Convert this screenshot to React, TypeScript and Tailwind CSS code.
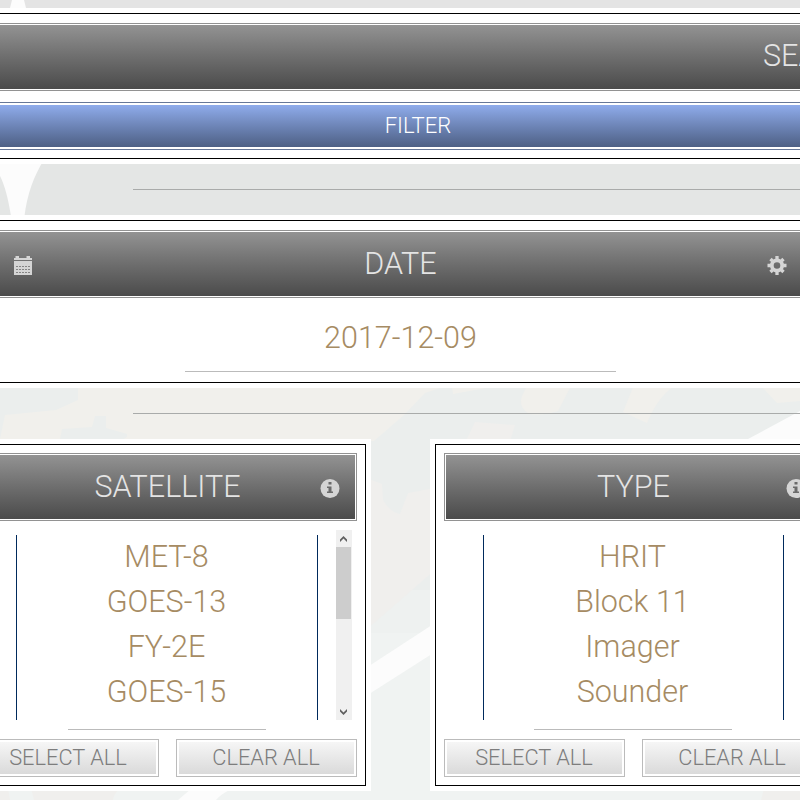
import React from "react";

function Backdrop() {
  return (
    <svg className="absolute inset-0" width="800" height="800" viewBox="0 0 800 800">
      <rect width="800" height="10" fill="#e4e4e4" />
      <rect y="160" width="800" height="60" fill="#e4e6e5" />
      <rect y="385" width="800" height="415" fill="#ebeeed" />
      <rect y="590" width="800" height="60" fill="#eef1f0" />
      <rect y="633" width="800" height="167" fill="#f0f3f2" />
      <path d="M10 8L13 -4H23L26 8Z" fill="#fcfcfc" />
      <path d="M0 160H44C34 175 27 195 24.500 216H11C8 198 5 186 0 176Z" fill="#fcfcfc" />
      <path d="M78 385H445L440 388L425 393L404 415L374 441H120L127 437L127 434L106 428V416L95 416L92 427L62 429L60 439H0L5 415L56 410L78 400Z" fill="#f1f0ec" />
      <path d="M452 387H492L486 388L453 394Z" fill="#f1f0ec" />
      <path d="M527 386H571L558 411Q543 416 530 414Q518 408 522 396Z" fill="#f1f0ec" />
      <path d="M634 385H676Q658 396 647 423L623 412Z" fill="#f1f0ec" />
      <path d="M760 385H800V401L777 403Z" fill="#f1f0ec" />
      <path d="M475 422L515 425L510 441H466Z" fill="#f0efed" />
      <path d="M748 439L800 411V439Z" fill="#fcfcfc" />
      <path d="M366 478L382 484L383 500Q390 512 400 514L408 493L435 488V570L366 630Z" fill="#f0efed" />
      <path d="M366 668L435 623V652L366 696Z" fill="#fcfcfc" />
      <path d="M0 788H8L10 800H0ZM31 788H121Q114 793 113 800H34ZM764 788H800V800H761Z" fill="#f0efed" />
      <path d="M192 788H234Q222 793 216 800H178Z" fill="#fcfcfc" />
    </svg>
  );
}

function Heading({ title, left, right, className = "", titleClass = "" }: { title: string; left?: React.ReactNode; right?: React.ReactNode; className?: string; titleClass?: string }) {
  return (
    <div className={`h-[68px] border border-[#929292] bg-white p-px ${className}`}>
      <div className="flex h-16 items-center bg-linear-to-b from-[#939393] to-[#4b4b4b] text-[30.5px] leading-[45px] text-[#e4e4e4]">
        <div className="w-12">{left}</div>
        <div className={`-mt-px flex-1 text-center ${titleClass}`}>{title}</div>
        <div className="w-12">{right}</div>
      </div>
    </div>
  );
}

function CalendarIcon() {
  return (
    <svg className="mt-0.5 ml-[13px]" width="20" height="20" viewBox="0 0 20 20" fill="#d5d5d5">
      <path d="M1 3H2.500V1H6V3H13.500V1H17V3H19V5H1Z M1 6H19V20H1Z" />
      <path d="M3 11.500H17M3 14.500H17M3 17.500H17" stroke="#858585" strokeDasharray="2 1" />
    </svg>
  );
}

function GearIcon() {
  return (
    <svg className="mt-0.5 ml-[15px]" width="20" height="20" viewBox="0 0 20 20">
      <circle cx="10" cy="10.500" r="5.200" fill="none" stroke="#d5d5d5" strokeWidth="3.800" />
      <path d="M10 1V4M10 17V20M.5 10.500H3.500M16.500 10.500H19.500M3.500 4L5.500 6M14.500 15L16.500 17M3.500 17L5.500 15M14.500 6L16.500 4" stroke="#d5d5d5" strokeWidth="3.300" />
    </svg>
  );
}

function InfoIcon() {
  return (
    <svg className="mt-[3px] ml-[13px]" width="20" height="20" viewBox="0 0 20 20">
      <circle cx="10" cy="9.500" r="9.500" fill="#d5d5d5" />
      <path d="M8.500 3H11.500V5.500H8.500ZM7 7.500H11.500V12.500H13V14H7V12.500H8.500V9H7Z" fill="#6b6b6b" />
    </svg>
  );
}

function Divider() {
  return (
    <div className="flex h-[51px] pt-[25px]">
      <div className="ml-[133px] h-px flex-1 bg-[#a9abaa]" />
    </div>
  );
}

function GreyButton({ label }: { label: string }) {
  return (
    <button className="h-[38px] w-[181px] border border-[#bbbbbb] bg-white p-0.5">
      <span className="block h-8 bg-linear-to-b from-[#f6f6f6] to-[#dadada] pr-px text-[21.8px] leading-[31px] text-[#7d7d7d]">{label}</span>
    </button>
  );
}

function Scrollbar() {
  return (
    <div className="absolute top-[85px] right-[13px] flex h-[190px] w-4 flex-col bg-[#f0f0f0]">
      <svg width="16" height="17" viewBox="0 0 16 17"><path d="M4 12V9.500L7.500 6L11 9.500V12L7.500 8.500Z" fill="#606060" /></svg>
      <div className="h-[72px] w-[15px] bg-[#cdcdcd]" />
      <svg className="mt-auto" width="16" height="17" viewBox="0 0 16 17"><path d="M4 6V8.500L7.500 12L11 8.500V6L7.500 9.500Z" fill="#606060" /></svg>
    </div>
  );
}

function ListCard({ title, items, listClass, scroll }: { title: string; items: string[]; listClass: string; scroll?: boolean }) {
  return (
    <section className="h-[352px] w-[407px] shrink-0 bg-white p-[5px]">
      <div className="relative h-[342px] border border-black px-2 pt-2">
        <Heading title={title} right={<InfoIcon />} />
        <ul className={`mt-[14px] h-[185px] border-x border-[#002a5c] text-center text-[30.5px] leading-[45px] text-[#a68b63] ${listClass}`}>
          {items.map((item) => <li key={item} className="relative -top-px h-[45px]">{item}</li>)}
        </ul>
        <div className="mt-[9px] ml-[90px] h-px w-[198px] bg-[#bbbbbb]" />
        <div className="mt-[9px] flex gap-[17px]">
          <GreyButton label="SELECT ALL" />
          <GreyButton label="CLEAR ALL" />
        </div>
        {scroll && <Scrollbar />}
      </div>
    </section>
  );
}

export default function App() {
  return (
    <main className="relative h-[800px] w-[800px] overflow-hidden font-['Roboto','Liberation_Sans',sans-serif] font-light">
      <Backdrop />
      <div className="relative pt-2">
        <section className="h-[156px] bg-white py-[5px]">
          <div className="h-[146px] border-y border-black pt-[9px]">
            <div className="flex h-[68px] border-y border-[#929292] bg-white py-px">
              <div className="flex-1 bg-linear-to-b from-[#939393] to-[#4b4b4b] pl-[763px] text-[30.5px] leading-[62px] whitespace-nowrap text-[#e4e4e4]">SEARCH</div>
            </div>
            <button className="mt-[11px] block h-12 w-full border-y border-[#677898] bg-white py-0.5">
              <span className="block h-[42px] bg-linear-to-b from-[#8facec] to-[#4e6085] pl-9 text-center text-[22px] leading-[41px] text-white">FILTER</span>
            </button>
          </div>
        </section>
        <Divider />
        <section className="h-[173px] bg-white py-[5px]">
          <div className="h-[163px] border-y border-black pt-[9px]">
            <Heading title="DATE" className="border-x-0 px-0" titleClass="pl-px" left={<CalendarIcon />} right={<GearIcon />} />
            <div className="h-[73px] pl-px text-center text-[30.5px] leading-[80px] text-[#a68b63]">2017-12-09</div>
            <div className="ml-[185px] h-px w-[431px] bg-[#bbbbbb]" />
          </div>
        </section>
        <Divider />
        <div className="-ml-9 flex gap-[59px]">
          <ListCard title="SATELLITE" items={["MET-8", "GOES-13", "FY-2E", "GOES-15"]} listClass="ml-[38px] w-[302px] pr-px" scroll />
          <ListCard title="TYPE" items={["HRIT", "Block 11", "Imager", "Sounder"]} listClass="ml-[39px] w-[301px] pr-0.5" />
        </div>
      </div>
    </main>
  );
}
